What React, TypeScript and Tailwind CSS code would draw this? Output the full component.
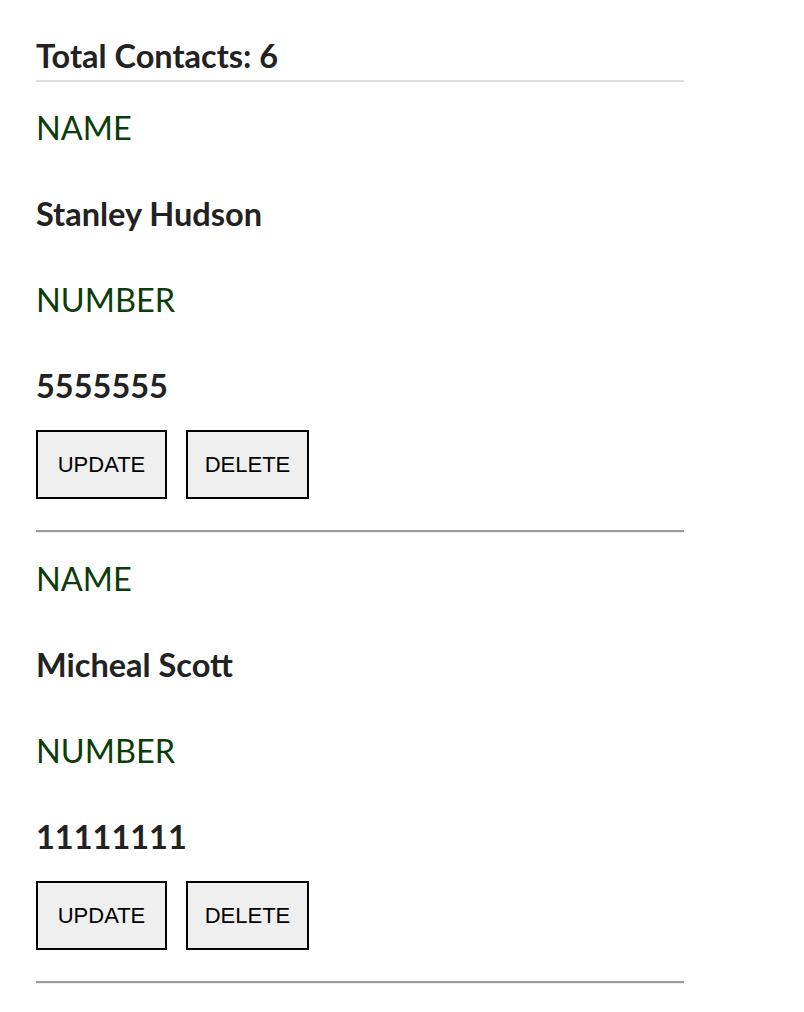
import React from "react";

const contacts = [
  { name: "Stanley Hudson", number: "5555555" },
  { name: "Micheal Scott", number: "11111111" },
];

const btn =
  "h-[69px] border-2 border-black bg-[#efefef] px-0 text-[22px] text-black";

export default function App() {
  return (
    <div className="min-h-screen bg-white pl-9 pt-[37px]" style={{ fontFamily: "Lato, 'Liberation Sans', sans-serif" }}>
      <div className="w-[648px]">
        <div className="border-b-2 border-[#dddddd] pb-[5px]">
          <h2 className="text-[32.5px] font-bold leading-[38px] text-[#222222]">Total Contacts: 6</h2>
        </div>
        {contacts.map((c) => (
          <div key={c.name} className="pt-[27px]">
            <div className="text-[32.5px] leading-[38px] text-[#0b3d0b]">NAME</div>
            <div className="mt-[48px] text-[32.5px] font-bold leading-[38px] text-[#222222]">{c.name}</div>
            <div className="mt-[48px] text-[32.5px] leading-[38px] text-[#0b3d0b]">NUMBER</div>
            <div className="mt-[48px] text-[32.5px] font-bold leading-[38px] text-[#222222]">{c.number}</div>
            <div className="mt-[25px] flex gap-[19px]">
              <button className={`${btn} w-[131px]`} style={{ fontFamily: "'Liberation Sans', Arial, sans-serif" }}>UPDATE</button>
              <button className={`${btn} w-[123px]`} style={{ fontFamily: "'Liberation Sans', Arial, sans-serif" }}>DELETE</button>
            </div>
            <div className="mt-[31px] border-t-2 border-b border-t-[#9a9a9a] border-b-[#eeeeee]" />
          </div>
        ))}
      </div>
    </div>
  );
}
